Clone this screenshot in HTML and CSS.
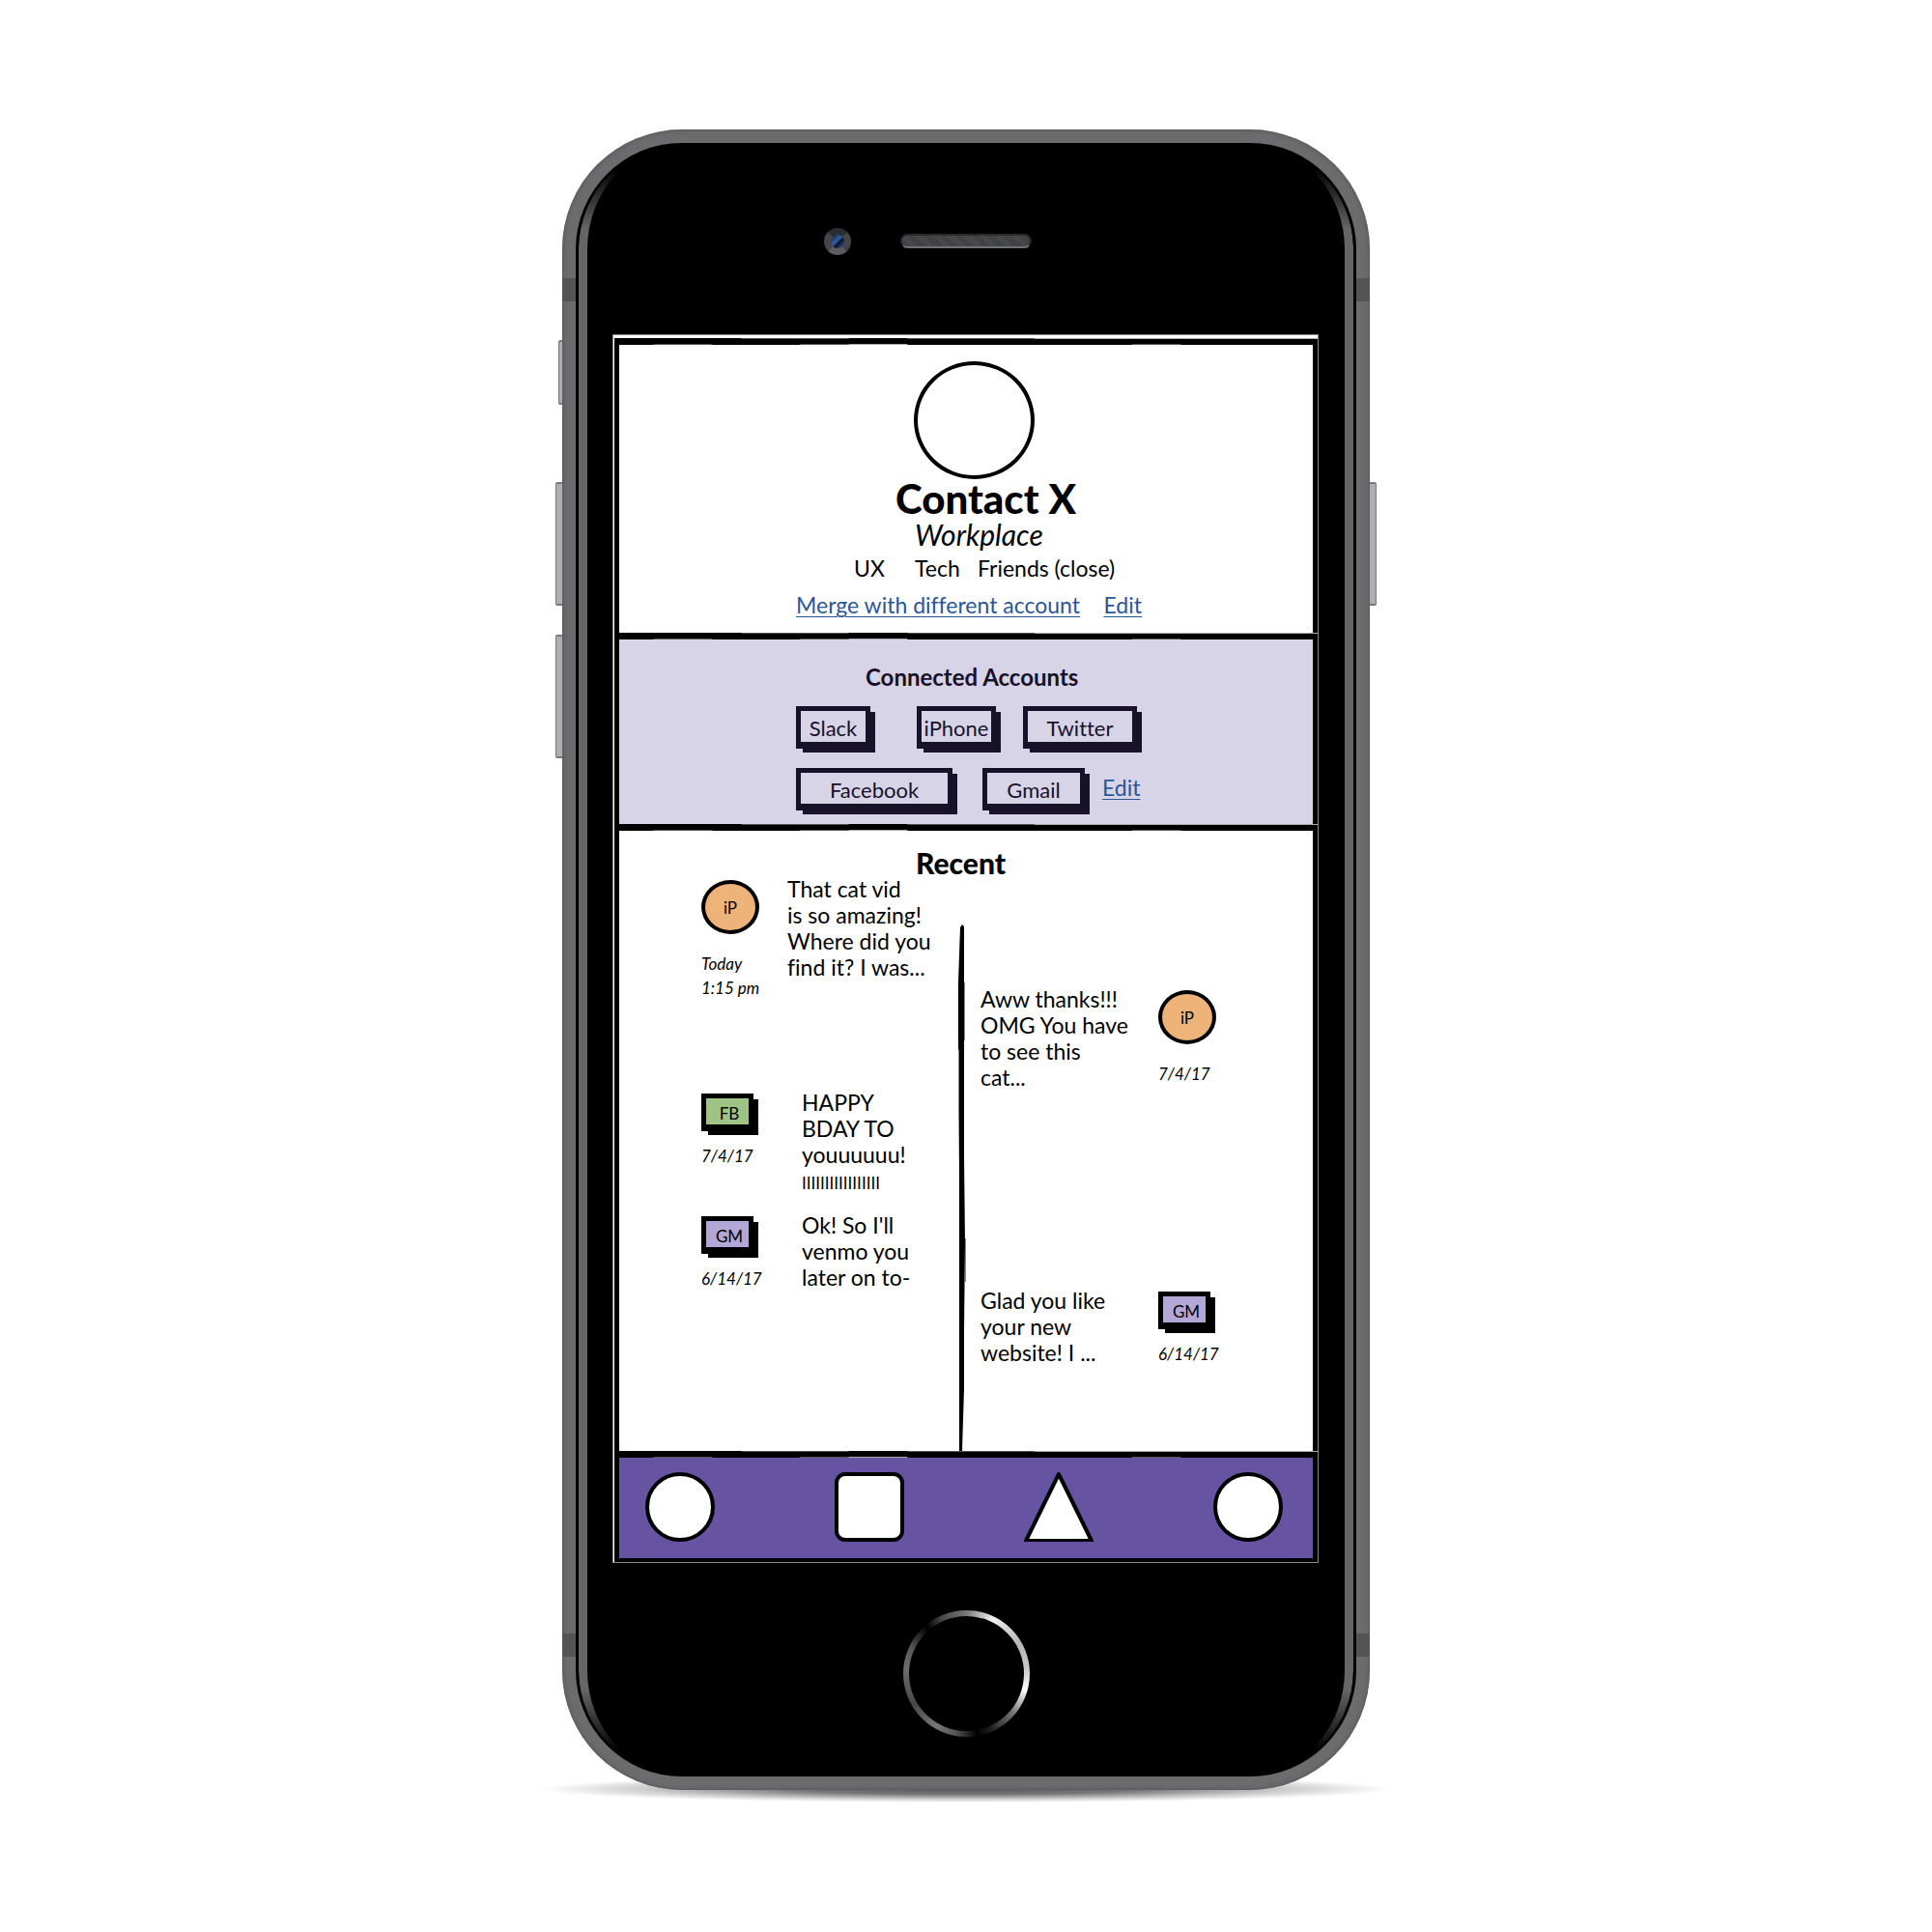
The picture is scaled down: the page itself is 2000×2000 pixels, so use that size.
FILE: index.html
```html
<!DOCTYPE html>
<html lang="en">
<head>
<meta charset="utf-8">
<meta name="viewport" content="width=device-width, initial-scale=1">
<title>Contact X</title>
<link rel="stylesheet" href="styles.css">
</head>
<body>
<svg class="defs" aria-hidden="true">
  <symbol id="rule" viewBox="0 0 720 7" preserveAspectRatio="none">
    <path fill="#000" d="M0 0H720V7H0Z"/>
    <path fill="#555" d="M130 0h110v1h-110zM300 0h130v1h-130zM40 6h60v1h-60zM190 6h50v1h-50zM530 6h50v1h-50z"/>
    <path fill="#aaa" d="M430 0h290v1h-290zM240 6h60v1h-60z"/>
  </symbol>
</svg>
<main class="stage">
  <div class="device">
    <span class="key key-mute"></span>
    <span class="key key-up"></span>
    <span class="key key-down"></span>
    <span class="key key-power"></span>
    <span class="antenna antenna-top"></span>
    <span class="antenna antenna-bottom"></span>
    <div class="glass">
      <div class="bezel-top">
        <span class="camera"></span>
        <span class="speaker"></span>
      </div>
      <div class="screen">
        <svg class="rule" aria-hidden="true"><use href="#rule"/></svg>
        <header class="profile">
          <div class="column">
            <div class="avatar"></div>
            <h1 class="name">Contact X</h1>
            <p class="workplace">Workplace</p>
            <ul class="tags"><li>UX</li><li>Tech</li><li>Friends (close)</li></ul>
            <div class="links"><a href="#merge">Merge with different account</a><a href="#edit">Edit</a></div>
          </div>
        </header>
        <svg class="rule" aria-hidden="true"><use href="#rule"/></svg>
        <section class="accounts">
          <div class="column">
            <h2 class="accounts-title">Connected Accounts</h2>
            <div class="account-row row-one">
              <button class="box slack">Slack</button>
              <button class="box iphone">iPhone</button>
              <button class="box twitter">Twitter</button>
            </div>
            <div class="account-row row-two">
              <button class="box facebook">Facebook</button>
              <button class="box gmail">Gmail</button>
              <a href="#accounts">Edit</a>
            </div>
          </div>
        </section>
        <svg class="rule" aria-hidden="true"><use href="#rule"/></svg>
        <section class="recent">
          <h2 class="recent-title">Recent</h2>
          <div class="timeline">
            <div class="received">
              <article class="message wide">
                <div class="source"><span class="badge round">iP</span><time>Today<br>1:15 pm</time></div>
                <p>That cat vid<br>is so amazing!<br>Where did you<br>find it? I was...</p>
              </article>
              <article class="message second">
                <div class="source"><span class="badge box green">FB</span><time>7/4/17</time></div>
                <p>HAPPY<br>BDAY TO<br>youuuuuu!<br><small>IIIIIIIIIIIIIIIII</small></p>
              </article>
              <article class="message third">
                <div class="source"><span class="badge box violet">GM</span><time>6/14/17</time></div>
                <p>Ok! So I'll<br>venmo you<br>later on to-</p>
              </article>
            </div>
            <svg class="spine" viewBox="0 0 9 545" preserveAspectRatio="none" aria-hidden="true">
              <path fill="#000" d="M3 3 L5 0 L7 2 L7 240 L8 330 L7 420 L7 480 L5 545 L2 545 L2 420 L2 260 L1 120 L1 60 Z"/>
              <path fill="#888" d="M8 325h1v45h-1zM1 130h1v60h-1zM7 60h1v60h-1z"/>
            </svg>
            <div class="sent">
              <article class="message">
                <p>Aww thanks!!!<br>OMG You have<br>to see this<br>cat...</p>
                <div class="source"><span class="badge round">iP</span><time>7/4/17</time></div>
              </article>
              <article class="message last">
                <p>Glad you like<br>your new<br>website! I ...</p>
                <div class="source"><span class="badge box violet">GM</span><time>6/14/17</time></div>
              </article>
            </div>
          </div>
        </section>
        <svg class="rule" aria-hidden="true"><use href="#rule"/></svg>
        <nav class="tabs">
          <button class="tab" aria-label="Profile"><svg viewBox="0 0 72 72"><circle cx="36" cy="36" r="34"/></svg></button>
          <button class="tab" aria-label="Messages"><svg viewBox="0 0 72 72"><rect x="2" y="2" width="68" height="68" rx="9"/></svg></button>
          <button class="tab" aria-label="Home"><svg viewBox="0 0 72 72"><path d="M36 2L70 71H2Z"/></svg></button>
          <button class="tab" aria-label="Settings"><svg viewBox="0 0 72 72"><circle cx="36" cy="36" r="34"/></svg></button>
        </nav>
      </div>
      <div class="bezel-bottom"><button class="home" aria-label="Home button"></button></div>
    </div>
  </div>
</main>
</body>
</html>
```
FILE: styles.css
```css
* { box-sizing: border-box; }

body {
  margin: 0;
  background: #fff;
  color: #000;
  font: 23px/27px Lato, "Open Sans", sans-serif;
  font-variant-ligatures: none;
}

h1, h2, p, ul { margin: 0; padding: 0; }
ul { list-style: none; }
a { color: #2a5699; text-decoration-thickness: 1px; text-underline-offset: 3px; }
button { font: inherit; color: inherit; padding: 0; margin: 0; }

.defs { position: absolute; width: 0; height: 0; }

.stage { display: flex; justify-content: center; padding: 134px 24px; }

/* Phone body */
.device {
  position: relative;
  width: 100%;
  max-width: 836px;
  padding: 14px;
  border-radius: 124px;
  background: #6c6c6e;
  box-shadow: inset 0 0 4px 1px #58585a;
}
.device::before {
  content: "";
  position: absolute;
  z-index: -1;
  left: -24px;
  right: -24px;
  bottom: -13px;
  height: 28px;
  background: radial-gradient(closest-side, #555 0%, #777 40%, rgba(130, 130, 130, 0.4) 75%, rgba(255, 255, 255, 0) 100%);
}

.key {
  position: absolute;
  z-index: -1;
  left: -7px;
  width: 9px;
  height: 128px;
  border: 1px solid #77797a;
  border-width: 2px 1px;
  border-radius: 2px;
  background: #acaeb0;
}
.key-mute { top: 218px; left: -4px; height: 67px; }
.key-up { top: 365px; }
.key-down { top: 523px; }
.key-power { top: 365px; left: auto; right: -7px; }

.antenna {
  position: absolute;
  left: 0;
  right: 0;
  height: 24px;
  background: #525456;
}
.antenna-top { top: 154px; }
.antenna-bottom { bottom: 138px; }

.glass {
  position: relative;
  border-radius: 110px;
  background: #000;
}
.glass::before {
  content: "";
  position: absolute;
  inset: 0 3px;
  border: 0 solid #666;
  border-width: 0 9px;
  border-radius: 110px;
  pointer-events: none;
  -webkit-mask-image: linear-gradient(transparent 26px, #000 90px, #000 calc(100% - 90px), transparent calc(100% - 26px));
  mask-image: linear-gradient(transparent 26px, #000 90px, #000 calc(100% - 90px), transparent calc(100% - 26px));
}

.bezel-top {
  display: grid;
  grid-template-columns: 1fr 136px 1fr;
  align-items: center;
  height: 198px;
  padding-top: 5px;
}
.camera {
  justify-self: end;
  width: 28px;
  height: 28px;
  margin-right: 51px;
  border: 7px solid #434547;
  border-top-color: #2b2e30;
  border-bottom-color: #5b5c5e;
  border-radius: 50%;
  background: linear-gradient(135deg, #1d3663 20%, #3460a8 45%, #0a1020 60%, #233f74 80%);
}
.speaker {
  grid-column: 2;
  height: 15px;
  border: 2px solid #27292b;
  border-bottom-color: #707274;
  border-radius: 8px;
  background: repeating-linear-gradient(45deg, #3a3c3e 0 1px, #4c4f52 1px 2px);
}

.bezel-bottom { display: flex; justify-content: center; padding: 49px 0 41px; }
.home {
  width: 131px;
  height: 131px;
  border: 6px solid transparent;
  border-radius: 50%;
  background:
    linear-gradient(#000, #000) padding-box,
    conic-gradient(#77777a 0deg, #f2f2f2 25deg, #b5b5b8 60deg, #c8c8ca 85deg, #fff 105deg, #777 130deg, #222 155deg, #000 170deg, #555 190deg, #77777a 210deg, #454646 240deg, #6d6d70 275deg, #555 295deg, #000 320deg, #444 335deg, #77777a 360deg) border-box;
}

/* Screen */
.screen {
  margin: 0 39px 0 38px;
  padding-top: 3px;
  border: 1px solid #888a8a;
  background:
    linear-gradient(#000, #000) 1px 4px / 5px 100% no-repeat,
    linear-gradient(#000, #000) 100% 4px / 5px 100% no-repeat,
    #fff;
}
.rule { display: block; width: 100%; height: 7px; padding: 0 0 0 1px; }
.profile, .accounts, .recent, .tabs { margin: 0 5px 0 6px; }

.column { width: 100%; max-width: 358px; margin: 0 auto; }

.profile { padding: 17px 0 9px 6px; }
.avatar {
  width: 125px;
  height: 122px;
  margin-left: 122px;
  border: 4px solid #000;
  border-radius: 50%;
}
.name { margin-left: 103px; font-size: 42px; font-weight: 900; line-height: 40px; white-space: nowrap; }
.workplace { margin-left: 123px; font-size: 30px; line-height: 34px; font-style: italic; }
.tags {
  display: grid;
  grid-template-columns: 63px 65px 1fr;
  padding-left: 60px;
  line-height: 36px;
  white-space: nowrap;
}
.links { display: flex; justify-content: space-between; line-height: 40px; }

/* Connected accounts */
.accounts { padding: 23px 0 14px 6px; background: #d8d4e8; color: #17112a; }
.accounts-title { font-size: 24px; line-height: 32px; margin: 0 0 14px 72px; white-space: nowrap; }
.account-row { display: grid; align-items: center; }
.row-one { grid-template-columns: 125px 110px 1fr; margin-bottom: 20px; }
.row-two { grid-template-columns: 193px 124px 1fr; }
.account-row a { padding-bottom: 3px; }

.box {
  border: 5px solid currentColor;
  border-bottom-width: 7px;
  box-shadow: 6px 5px 0 -1px currentColor;
  background: transparent;
}
.account-row .box { height: 44px; padding-top: 2px; font-size: 22px; }
.slack { width: 77px; }
.iphone { width: 82px; }
.twitter { width: 118px; }
.facebook { width: 162px; }
.gmail { width: 106px; }

/* Recent messages */
.recent-title { padding: 19px 0 0 307px; font-size: 30px; font-weight: 900; line-height: 28px; }
.timeline { display: grid; grid-template-columns: 350px 9px 1fr; }
.spine { width: 9px; height: calc(100% - 50px); margin-top: 50px; }

.message { display: grid; white-space: nowrap; }
.message p { min-width: 0; }
.message small { font-size: 17px; }
.received { padding-left: 85px; }
.received .message { grid-template-columns: 60px 1fr; column-gap: 44px; }
.received .wide { column-gap: 29px; }
.second { margin-top: 93px; }
.third { margin-top: 17px; }
.sent { padding: 114px 0 88px 15px; }
.sent .message { grid-template-columns: 184px 60px; }
.last { margin-top: 204px; }

.source { padding-top: 4px; font-size: 17px; line-height: 25px; }
.source time { display: block; font-style: italic; }
.badge { display: flex; align-items: center; justify-content: center; }
.badge.round {
  width: 60px;
  height: 56px;
  margin-bottom: 18px;
  border: 4px solid #000;
  border-radius: 50%;
  background: #edb378;
}
.badge.box { width: 54px; height: 39px; margin-bottom: 13px; padding: 3px 0 0 4px; }
.green { background: #9fc385; }
.violet { background: #b2a7d6; }

/* Bottom tabs */
.tabs {
  display: flex;
  justify-content: space-between;
  padding: 15px 31px 17px 27px;
  margin-bottom: 4px;
  background: #6653a2;
  box-shadow: 0 4px 0 #000;
}
.tab { display: block; width: 72px; height: 72px; border: 0; background: none; }
.tab svg { display: block; width: 72px; height: 72px; fill: #fff; stroke: #000; stroke-width: 4; stroke-linejoin: round; }
```
